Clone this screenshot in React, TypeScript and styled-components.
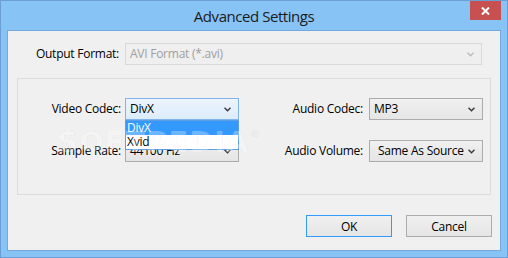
import React from 'react';
import styled, { createGlobalStyle, css } from 'styled-components';

const Global = createGlobalStyle`
  html, body {
    margin: 0;
    padding: 0;
    background: #88c3f6;
  }
  body {
    font-family: "Open Sans", "Noto Sans", sans-serif;
    font-size: 12px;
    letter-spacing: -0.25px;
    color: #000;
  }
`;

const Window = styled.div`
  position: relative;
  width: 508px;
  height: 258px;
  box-sizing: border-box;
  border: 1px solid #6a9ed4;
  background: #88c3f6;
  padding: 0 6px 6px 6px;
  display: flex;
  flex-direction: column;
  overflow: hidden;
`;

const TitleBar = styled.div`
  height: 29px;
  flex-shrink: 0;
  display: grid;
  grid-template-columns: 1fr auto 1fr;
  align-items: start;
`;

const Title = styled.div`
  grid-column: 2;
  font-size: 15px;
  line-height: 30px;
  color: #1b1b1b;
  letter-spacing: -0.45px;
`;

const CloseButton = styled.div`
  grid-column: 3;
  justify-self: end;
  width: 31px;
  height: 19px;
  background: #c75050;
  display: flex;
  align-items: center;
  justify-content: center;
`;

const Client = styled.div`
  flex: 1;
  border: 1px solid #74a9de;
  background: #f0f0f0;
  display: flex;
  flex-direction: column;
`;

const FormatRow = styled.div`
  margin-top: 12px;
  display: grid;
  grid-template-columns: 111px 357px;
  column-gap: 6px;
  align-items: center;
`;

const Label = styled.div<{ $pad?: number }>`
  text-align: right;
  white-space: nowrap;
  padding-right: ${p => p.$pad ?? 0}px;
  line-height: 22px;
`;

const Group = styled.div`
  margin: 13px 9px 0 9px;
  height: 117px;
  box-sizing: border-box;
  border: 1px solid #dcdcdc;
  padding-top: 19px;
`;

const Grid = styled.div`
  display: grid;
  grid-template-columns: 107px 114px 130px 114px;
  row-gap: 20px;
  align-items: center;
`;

type ComboState = 'normal' | 'hot' | 'disabled';

const ComboBox = styled.div<{ $state: ComboState }>`
  position: relative;
  height: 22px;
  box-sizing: border-box;
  border: 1px solid #acacac;
  background: linear-gradient(#f0f0f0, #e5e5e5);
  display: flex;
  align-items: center;
  justify-content: space-between;
  ${p => p.$state === 'hot' && css`
    border-color: #7eb4ea;
    background: linear-gradient(#ecf4fc, #dcecfc);
  `}
  ${p => p.$state === 'disabled' && css`
    border-color: #d9d9d9;
    background: #efefef;
    color: #a0a0a0;
  `}
`;

const ComboText = styled.span<{ $pad: number }>`
  padding-left: ${p => p.$pad}px;
  white-space: nowrap;
  overflow: hidden;
  flex: 1;
  min-width: 0;
  line-height: 20px;
`;

const Chevron = styled.svg`
  flex-shrink: 0;
  margin: 1px 7px 0 4px;
`;

const DropList = styled.div`
  position: absolute;
  left: -1px;
  right: -1px;
  top: 21px;
  border: 1px solid #5c9ee0;
  background: #fff;
  z-index: 2;
`;

const ListItem = styled.div<{ $selected?: boolean }>`
  height: 14px;
  line-height: 14px;
  padding-left: 1px;
  ${p => p.$selected && css`
    background: #3399ff;
    color: #fff;
  `}
`;

const ButtonRow = styled.div`
  margin: 20px 8px 0 0;
  display: flex;
  justify-content: flex-end;
  gap: 14px;
`;

const Button = styled.div<{ $default?: boolean }>`
  width: 86px;
  height: 22px;
  box-sizing: border-box;
  border: 1px solid ${p => (p.$default ? '#3399ff' : '#acacac')};
  background: linear-gradient(#f0f0f0, #e5e5e5);
  display: flex;
  align-items: center;
  justify-content: center;
`;

const Watermark = styled.div`
  position: absolute;
  left: 56px;
  top: 124px;
  font-family: "DejaVu Sans", sans-serif;
  font-weight: bold;
  font-size: 29px;
  letter-spacing: 1px;
  color: rgba(255, 255, 255, 0.3);
  -webkit-text-stroke: 1px rgba(0, 0, 0, 0.04);
  pointer-events: none;
  z-index: 3;
  sup {
    font-size: 11px;
    vertical-align: 14px;
  }
`;

function Arrow({ disabled }: { disabled?: boolean }) {
  return (
    <Chevron width="7" height="5" viewBox="0 0 7 5">
      <polyline
        points="0.5,0.8 3.5,3.8 6.5,0.8"
        fill="none"
        stroke={disabled ? '#bcbcbc' : '#3c3c3c'}
        strokeWidth="1.5"
      />
    </Chevron>
  );
}

function Combo({
  value,
  state = 'normal',
  pad = 4,
  children,
}: {
  value: string;
  state?: ComboState;
  pad?: number;
  children?: React.ReactNode;
}) {
  return (
    <ComboBox $state={state}>
      <ComboText $pad={pad}>{value}</ComboText>
      <Arrow disabled={state === 'disabled'} />
      {children}
    </ComboBox>
  );
}

export default function App() {
  return (
    <>
      <Global />
      <Window>
        <TitleBar>
          <Title>Advanced Settings</Title>
          <CloseButton>
            <svg width="9" height="8" viewBox="0 0 9 8">
              <path d="M1 0.5 L8 7.5 M8 0.5 L1 7.5" stroke="#fff" strokeWidth="2" />
            </svg>
          </CloseButton>
        </TitleBar>
        <Client>
          <FormatRow>
            <Label>Output Format:</Label>
            <Combo value="AVI Format (*.avi)" state="disabled" />
          </FormatRow>
          <Group>
            <Grid>
              <Label $pad={4}>Video Codec:</Label>
              <Combo value="DivX" state="hot">
                <DropList>
                  <ListItem $selected>DivX</ListItem>
                  <ListItem>Xvid</ListItem>
                </DropList>
              </Combo>
              <Label $pad={6}>Audio Codec:</Label>
              <Combo value="MP3" />
              <Label $pad={4}>Sample Rate:</Label>
              <Combo value="44100 Hz" />
              <Label $pad={6}>Audio Volume:</Label>
              <Combo value="Same As Source" pad={8} />
            </Grid>
          </Group>
          <ButtonRow>
            <Button $default>OK</Button>
            <Button>Cancel</Button>
          </ButtonRow>
        </Client>
        <Watermark>
          SOFTPEDIA<sup>®</sup>
        </Watermark>
      </Window>
    </>
  );
}
